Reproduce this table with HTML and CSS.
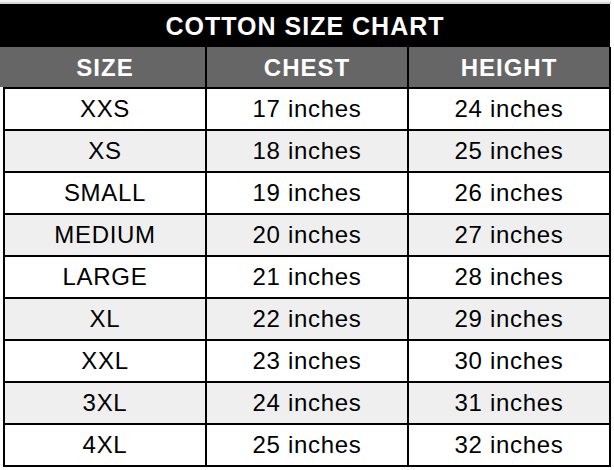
FILE: index.html
```html
<!DOCTYPE html>
<html>
<head>
<meta charset="utf-8">
<link rel="stylesheet" href="styles.css">
</head>
<body>
<div class="sheet">
  <div class="strip"></div>
  <div class="title">COTTON SIZE CHART</div>
  <div class="table">
    <div class="th">SIZE</div><div class="th">CHEST</div><div class="th">HEIGHT</div>
    <div class="td">XXS</div><div class="td">17 inches</div><div class="td">24 inches</div>
    <div class="td alt">XS</div><div class="td alt">18 inches</div><div class="td alt">25 inches</div>
    <div class="td">SMALL</div><div class="td">19 inches</div><div class="td">26 inches</div>
    <div class="td alt">MEDIUM</div><div class="td alt">20 inches</div><div class="td alt">27 inches</div>
    <div class="td">LARGE</div><div class="td">21 inches</div><div class="td">28 inches</div>
    <div class="td alt">XL</div><div class="td alt">22 inches</div><div class="td alt">29 inches</div>
    <div class="td">XXL</div><div class="td">23 inches</div><div class="td">30 inches</div>
    <div class="td alt">3XL</div><div class="td alt">24 inches</div><div class="td alt">31 inches</div>
    <div class="td">4XL</div><div class="td">25 inches</div><div class="td">32 inches</div>
  </div>
</div>
</body>
</html>
```

FILE: styles.css
```css
html, body {
  margin: 0;
  padding: 0;
  background: #ffffff;
}

.sheet {
  width: 614px;
  font-family: "Liberation Sans", Arial, sans-serif;
}

.strip {
  height: 2px;
  width: 611px;
  border-top: 2px solid #f4f4f4;
  background: #d6d6d6;
}

.title {
  width: 610px;
  height: 43px;
  background: #000000;
  color: #ffffff;
  font-weight: bold;
  font-size: 25px;
  letter-spacing: 1px;
  line-height: 44px;
  text-align: center;
}

.table {
  display: grid;
  grid-template-columns: repeat(3, 200px);
  grid-template-rows: 40px;
  grid-auto-rows: 40px;
  gap: 2px;
  width: 604px;
  margin-left: 3px;
  padding: 0 2px 2px 2px;
  background: #000000;
}

.th {
  background: #666666;
  color: #ffffff;
  font-weight: bold;
  font-size: 24px;
  letter-spacing: 1px;
  line-height: 41px;
  text-align: center;
}

.table .th:first-child {
  box-shadow: -5px 0 0 #666666;
}

.td {
  background: #ffffff;
  color: #000000;
  font-size: 24px;
  letter-spacing: 0.7px;
  line-height: 40px;
  text-align: center;
}

.td.alt {
  background: #efefef;
}
```
